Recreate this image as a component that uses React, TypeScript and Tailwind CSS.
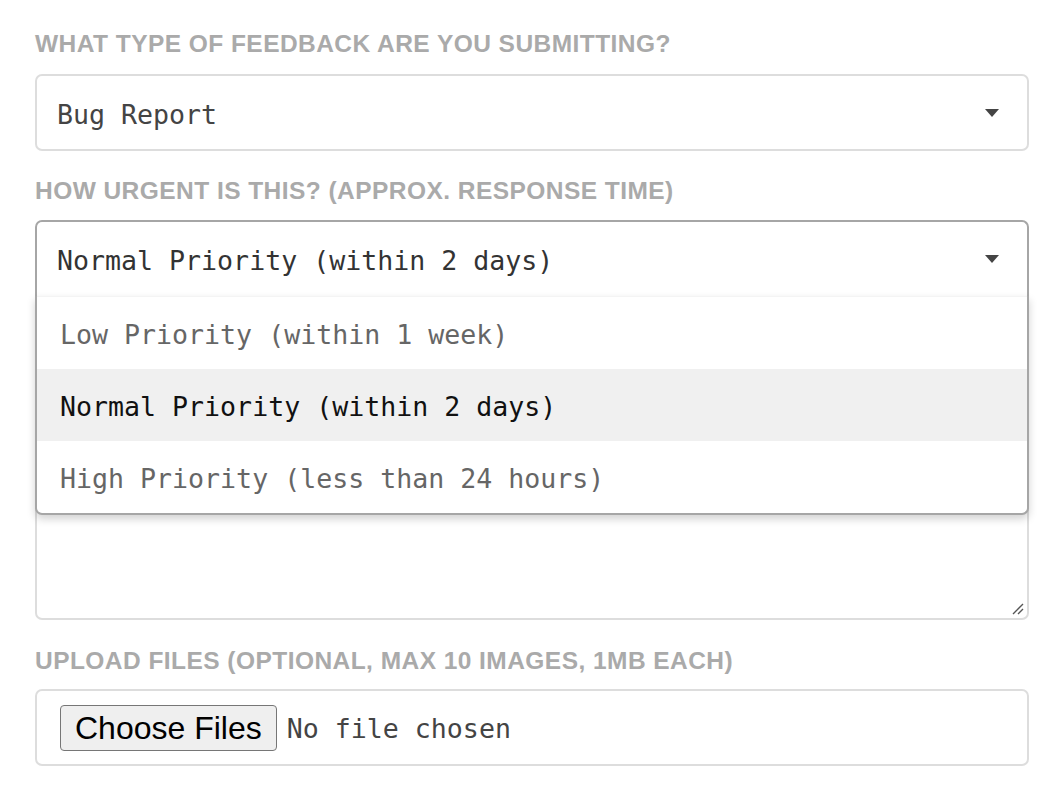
import React from 'react';

const mono = 'font-["DejaVu_Sans_Mono",monospace]';
const labelCls =
  'block font-["Liberation_Sans",Arial,sans-serif] font-bold text-[24.5px] leading-[25px] tracking-[0.45px] text-[#aaaaaa] uppercase';

const Caret: React.FC = () => (
  <svg width="14" height="8" viewBox="0 0 14 8" className="shrink-0">
    <path d="M0 0 H14 L7 8 Z" fill="#444444" />
  </svg>
);

const options = [
  'Low Priority (within 1 week)',
  'Normal Priority (within 2 days)',
  'High Priority (less than 24 hours)',
];

const App: React.FC = () => {
  const selected = 1;

  return (
    <div className="min-h-screen bg-white">
      <div className="ml-[35px] w-[994px] pt-[31px]">
        <label className={labelCls}>What type of feedback are you submitting?</label>
        <div className="mt-[18px] h-[77px] flex items-center justify-between pl-[20px] pr-[28px] border-2 border-[#dddddd] rounded-[7px] bg-white">
          <span className={`${mono} text-[26.6px] text-[#444444] pt-[4px]`}>Bug Report</span>
          <Caret />
        </div>

        <label className={`${labelCls} mt-[27px]`}>How urgent is this? (approx. response time)</label>
        <div className="relative mt-[17px] z-10">
          <div className="h-[76px] flex items-center justify-between pl-[20px] pr-[28px] border-2 border-b-0 border-[#a6a6a6] rounded-t-[7px] bg-white">
            <span className={`${mono} text-[26.6px] text-[#333333] pt-[3px]`}>Normal Priority (within 2 days)</span>
            <Caret />
          </div>
          <div className="absolute left-0 right-0 top-full border-2 border-t-0 border-[#a6a6a6] rounded-b-[7px] bg-white shadow-[0_4px_8px_rgba(0,0,0,0.18)] overflow-hidden">
            <div className="h-[1px] bg-[#f4f4f4]" />
            {options.map((opt, i) => (
              <div
                key={opt}
                className={`h-[72px] flex items-center pl-[23px] pt-[3px] ${mono} text-[26.6px] ${
                  i === selected ? 'bg-[#f0f0f0] text-[#111111]' : 'text-[#666666]'
                }`}
              >
                {opt}
              </div>
            ))}
          </div>
        </div>

        {/* label of the textarea sits under the open list */}
        <div className="mt-[27px] h-[25px]" />
        <div className="relative mt-[18px] h-[254px] border-2 border-[#dddddd] rounded-[7px] bg-white">
          <svg width="12" height="12" viewBox="0 0 12 12" className="absolute right-[3px] bottom-[3px]">
            <path d="M1 11 L11 1 M6 11 L11 6" stroke="#555555" strokeWidth="1.4" />
          </svg>
        </div>

        <label className={`${labelCls} mt-[28px]`}>Upload files (optional, max 10 images, 1MB each)</label>
        <div className="mt-[16px] h-[77px] flex items-center pl-[23px] border-2 border-[#dddddd] rounded-[7px] bg-white">
          <button
            type="button"
            className='h-[46px] px-[14px] bg-[#efefef] border-[1.5px] border-[#767676] rounded-[4px] font-["Liberation_Sans",Arial,sans-serif] text-[32px] leading-none text-black'
          >
            Choose Files
          </button>
          <span className={`ml-[10px] pt-[3px] ${mono} text-[26.6px] text-[#444444]`}>No file chosen</span>
        </div>
      </div>
    </div>
  );
};

export default App;
